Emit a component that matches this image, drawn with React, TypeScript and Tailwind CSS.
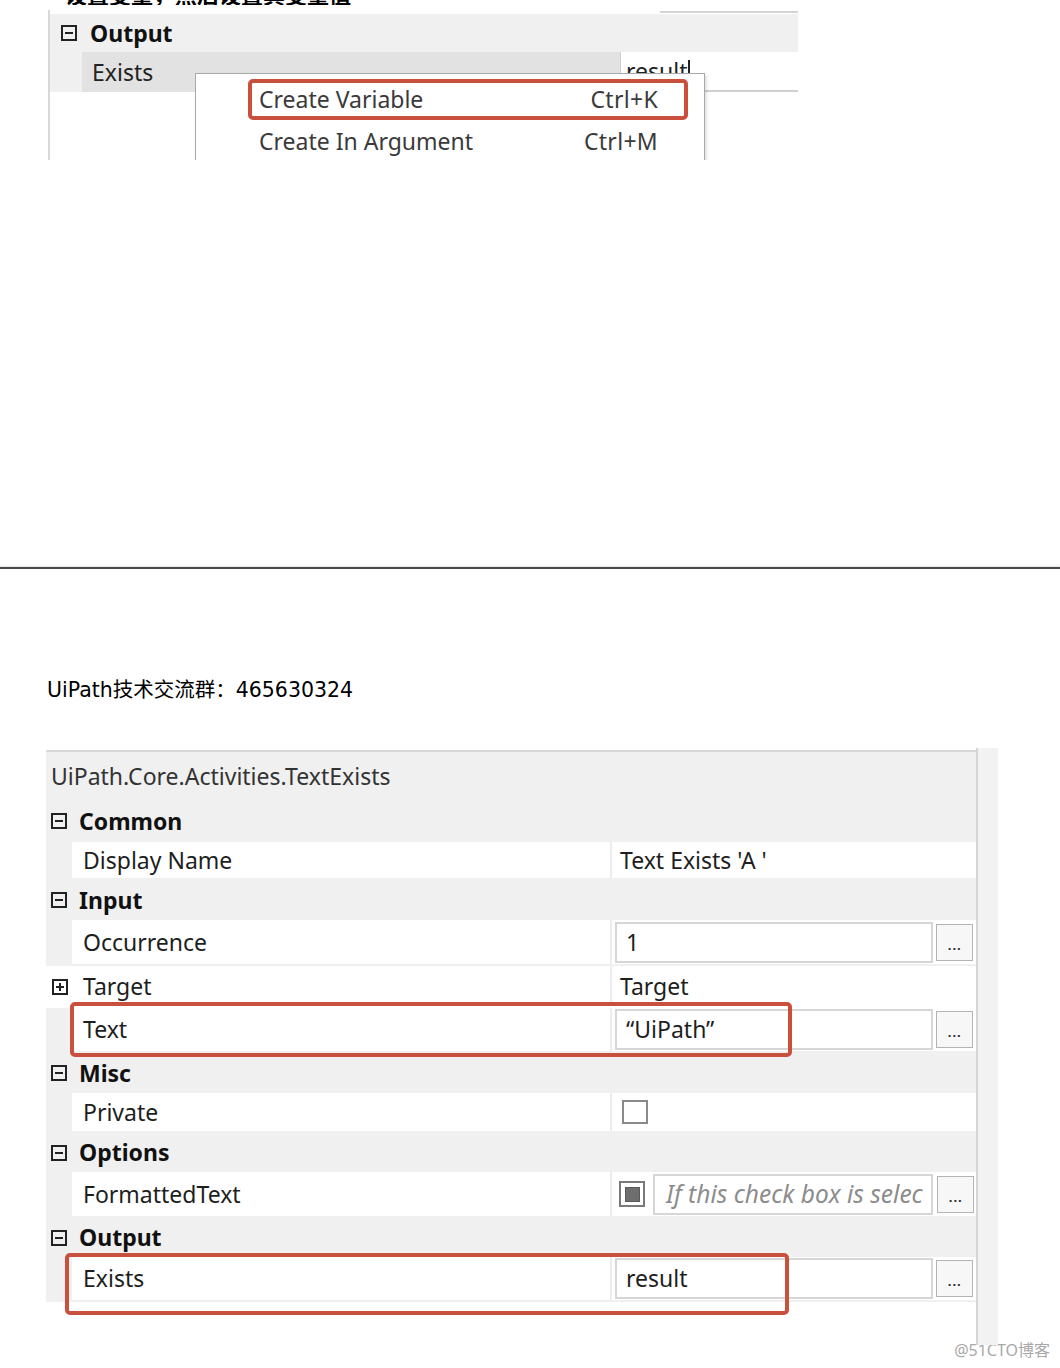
const UI = "font-['Noto_Sans','Noto_Sans_CJK_SC',sans-serif]"

// small expand / collapse box used by the property grid
function Toggle({ open = true }: { open?: boolean }) {
  return (
    <span className="relative flex h-[16px] w-[16px] shrink-0 items-center justify-center border-2 border-[#222]">
      <span className="h-[2px] w-[8px] bg-[#222]" />
      {!open && <span className="absolute h-[8px] w-[2px] bg-[#222]" />}
    </span>
  )
}

function Category({ title, h }: { title: string; h: string }) {
  return (
    <div className={`flex items-center gap-[12px] pl-[5px] ${h}`}>
      <Toggle />
      <span className="text-[23px] font-bold leading-none text-[#111]">{title}</span>
    </div>
  )
}

function Dots() {
  return (
    <div className="flex h-[37px] w-[37px] shrink-0 items-end justify-center border-[1.5px] border-[#b4b4b4] bg-[#f7f7f7] pb-[8px]">
      <span className="font-['DejaVu_Sans',sans-serif] text-[11px] font-bold leading-none tracking-[0.5px] text-[#333]">...</span>
    </div>
  )
}

function Box({ children, w = "w-[318px]" }: { children?: React.ReactNode; w?: string }) {
  return (
    <div className={`flex h-[41px] shrink-0 items-center overflow-hidden whitespace-nowrap border-2 border-[#d6d6d6] bg-white pl-[9px] ${w}`}>
      {children}
    </div>
  )
}

function Prop({
  name,
  h,
  children,
  expander,
}: {
  name: string
  h: string
  children?: React.ReactNode
  expander?: boolean
}) {
  return (
    <div className={`flex ${h} ${expander ? "bg-white" : ""}`}>
      <div className="flex w-[26px] shrink-0 items-center pl-[6px]">{expander && <Toggle open={false} />}</div>
      <div className="mb-[2px] flex flex-1 bg-white">
        <div className="flex w-[538px] shrink-0 items-center pl-[11px] text-[23px] text-[#1e1e1e]">{name}</div>
        <div className="w-[2px] bg-[#ececec]" />
        <div className="flex flex-1 items-center pr-[2px] text-[23px] text-[#1e1e1e]">{children}</div>
      </div>
    </div>
  )
}

function TopShot() {
  return (
    <div className="relative ml-[46px] mt-[5px] h-[150px] w-[754px] overflow-hidden pl-[2px]">
      <div className={`h-full border-l-2 border-[#d8d8d8] ${UI}`}>
        <div className="flex h-[4px]">
          <div className="w-[610px]" />
          <div className="mt-[1px] h-[2px] w-[138px] bg-[#d4d4d4]" />
        </div>
        <div className="flex h-[38px] w-[748px] items-center gap-[13px] bg-[#f0f0f0] pl-[11px]">
          <Toggle />
          <span className="text-[23px] font-bold leading-none text-[#111]">Output</span>
        </div>
        <div className="flex h-[40px] w-[748px]">
          <div className="w-[32px] bg-[#f0f0f0]" />
          <div className="flex w-[538px] items-center bg-[#e2e2e2] pl-[10px] text-[23px] text-[#222]">Exists</div>
          <div className="flex flex-1 items-center border-b-2 border-l border-[#d0d0d0] bg-white pl-[5px] text-[23px] text-[#222]">
            result<span className="ml-[1px] h-[22px] w-[1.5px] bg-[#222]" />
          </div>
        </div>
      </div>

      {/* context menu */}
      <div className={`absolute left-[149px] top-[63px] h-[100px] w-[510px] border border-[#a8a8a8] bg-white pt-[4px] text-[23px] text-[#3a3a3a] shadow-[2px_2px_3px_rgba(0,0,0,0.12)] ${UI}`}>
        <div className="flex h-[42px] items-center justify-between pl-[63px] pr-[46px]">
          <span>Create Variable</span>
          <span className="tracking-[0.3px]">Ctrl+K</span>
        </div>
        <div className="flex h-[42px] items-center justify-between pl-[63px] pr-[46px]">
          <span>Create In Argument</span>
          <span className="tracking-[0.3px]">Ctrl+M</span>
        </div>
        <div className="absolute left-[52px] top-[5px] h-[41px] w-[440px] rounded-[5px] border-4 border-[#c9503d]" />
      </div>
    </div>
  )
}

function Panel() {
  return (
    <div className={`relative ml-[46px] mt-[44px] flex items-start ${UI}`}>
      <div className="mt-[2px] w-[930px] border-t-2 border-[#d8d8d8] bg-[#f0f0f0]">
        <div className="flex h-[48px] items-center pl-[5px] text-[23px] text-[#333]">UiPath.Core.Activities.TextExists</div>

        <Category title="Common" h="h-[42px]" />
        <Prop name="Display Name" h="h-[38px]">
          <span className="pl-[8px]">Text Exists 'A '</span>
        </Prop>

        <Category title="Input" h="h-[40px]" />
        <Prop name="Occurrence" h="h-[46px]">
          <div className="flex items-center gap-[3px] pl-[3px]">
            <Box>1</Box>
            <Dots />
          </div>
        </Prop>
        <Prop name="Target" h="h-[42px]" expander>
          <span className="pl-[8px]">Target</span>
        </Prop>
        <Prop name="Text" h="h-[45px]">
          <div className="flex items-center gap-[3px] pl-[3px]">
            <Box>“UiPath”</Box>
            <Dots />
          </div>
        </Prop>

        <Category title="Misc" h="h-[40px]" />
        <Prop name="Private" h="h-[40px]">
          <div className="ml-[10px] h-[24px] w-[26px] border-2 border-[#8a8a8a] bg-white" />
        </Prop>

        <Category title="Options" h="h-[39px]" />
        <Prop name="FormattedText" h="h-[46px]">
          <div className="flex items-center pl-[7px]">
            <div className="flex h-[26px] w-[26px] shrink-0 items-center justify-center border-2 border-[#7a7a7a] bg-white">
              <div className="h-[15px] w-[15px] border border-[#5a5a5a] bg-[#6e6e6e]" />
            </div>
            <div className="ml-[8px]">
              <Box w="w-[280px]">
                <span className="pl-[2px] text-[24.5px] italic text-[#8c8c8c]">If this check box is selec</span>
              </Box>
            </div>
            <div className="ml-[4px]">
              <Dots />
            </div>
          </div>
        </Prop>

        <Category title="Output" h="h-[39px]" />
        <Prop name="Exists" h="h-[45px]">
          <div className="flex items-center gap-[3px] pl-[3px]">
            <Box>result</Box>
            <Dots />
          </div>
        </Prop>
      </div>
      <div className="h-[597px] w-[22px] border-l-2 border-[#d4d4d4] bg-[#f2f2f2]" />

      {/* red highlight frames */}
      <div className="absolute left-[24px] top-[254px] h-[55px] w-[722px] rounded-[5px] border-4 border-[#c9503d]" />
      <div className="absolute left-[19px] top-[505px] h-[62px] w-[724px] rounded-[5px] border-4 border-[#c9503d]" />
    </div>
  )
}

export default function App() {
  return (
    <div className="min-h-[1368px] w-[1060px] bg-white">
      <div className="h-[5px] overflow-hidden pl-[65px]">
        <div className="-mt-[18px] font-['Noto_Sans_CJK_SC',sans-serif] text-[22px] font-bold leading-[22px] text-black">
          设置变量，然后设置其变量值
        </div>
      </div>

      <TopShot />

      <div className="mt-[407px] h-[2px] bg-[#4a4a4a] shadow-[0_-1px_2px_rgba(0,0,0,0.12)]" />

      <div className="mt-[107px] pl-[47px] font-['DejaVu_Sans','Noto_Sans_CJK_SC',sans-serif] text-[20.5px] leading-[28px] text-black">
        UiPath技术交流群：465630324
      </div>

      <Panel />

      <div className="-mt-[5px] pr-[10px] text-right font-['Noto_Sans','Noto_Sans_CJK_SC',sans-serif] text-[16px] leading-[20px] text-[#a8a8a8]">
        @51CTO博客
      </div>
    </div>
  )
}
